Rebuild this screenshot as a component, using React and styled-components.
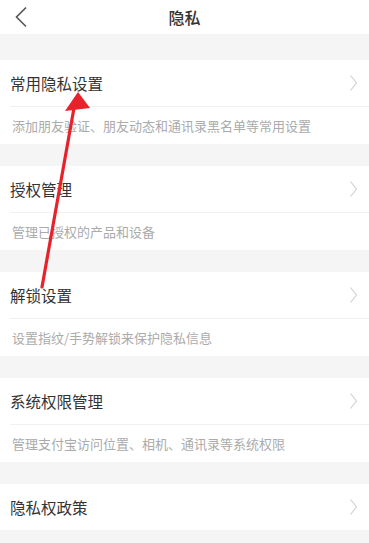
import React from 'react'
import styled, { createGlobalStyle } from 'styled-components'

const GlobalStyle = createGlobalStyle`
    html, body {
        margin: 0;
        padding: 0;
        background: #f5f5f5;
        font-family: "Noto Sans CJK SC", "Noto Sans", sans-serif;
    }
`

const items = [
    { title: '常用隐私设置', desc: '添加朋友验证、朋友动态和通讯录黑名单等常用设置' },
    { title: '授权管理', desc: '管理已授权的产品和设备' },
    { title: '解锁设置', desc: '设置指纹/手势解锁来保护隐私信息' },
    { title: '系统权限管理', desc: '管理支付宝访问位置、相机、通讯录等系统权限' },
    { title: '隐私权政策' },
]

function Chevron() {
    return (
        <svg width="9" height="18" viewBox="0 0 9 18">
            <path d="M1.5 1.5 L7.5 9 L1.5 16.5" fill="none" stroke="#d2d2d2" strokeWidth="1.2" />
        </svg>
    )
}

function App() {
    return (
        <Page>
            <GlobalStyle />
            <Header>
                <BackButton>
                    <svg width="14" height="22" viewBox="0 0 14 22">
                        <path d="M12 1.5 L2.5 11 L12 20.5" fill="none" stroke="#555" strokeWidth="1.6" />
                    </svg>
                </BackButton>
                <HeaderTitle>隐私</HeaderTitle>
            </Header>
            <List>
                {items.map((item) => (
                    <Section key={item.title}>
                        <TitleRow>
                            <Title>{item.title}</Title>
                            <Chevron />
                        </TitleRow>
                        {item.desc && <Desc>{item.desc}</Desc>}
                    </Section>
                ))}
            </List>
            <Arrow width="369" height="543" viewBox="0 0 369 543">
                <line x1="42" y1="287" x2="74" y2="108" stroke="#e8222b" strokeWidth="3.2" strokeLinecap="round" />
                <polygon points="78,92 65,111 90,108" fill="#e8222b" />
            </Arrow>
        </Page>
    )
}

const Page = styled.div`
    position: relative;
    width: 369px;
    min-height: 543px;
    overflow: hidden;
`

const Header = styled.div`
    position: relative;
    height: 34px;
    background: #fff;
    display: flex;
    align-items: center;
    justify-content: center;
`

const BackButton = styled.div`
    position: absolute;
    left: 14px;
    top: 6px;
    display: flex;
`

const HeaderTitle = styled.div`
    font-size: 16px;
    color: #333;
    font-weight: 500;
`

const List = styled.div`
    display: flex;
    flex-direction: column;
    gap: 22px;
    padding-top: 26px;
`

const Section = styled.div`
    background: #fff;
`

const TitleRow = styled.div`
    height: 46px;
    display: flex;
    align-items: center;
    justify-content: space-between;
    padding: 0 11px 0 10px;
`

const Title = styled.div`
    font-size: 15.5px;
    color: #333;
`

const Desc = styled.div`
    box-sizing: border-box;
    height: 38px;
    margin-left: 10px;
    border-top: 1px solid #f0f0f0;
    display: flex;
    align-items: center;
    padding-left: 2px;
    font-size: 13px;
    color: #ababab;
`

const Arrow = styled.svg`
    position: absolute;
    left: 0;
    top: 0;
    pointer-events: none;
`

export default App
